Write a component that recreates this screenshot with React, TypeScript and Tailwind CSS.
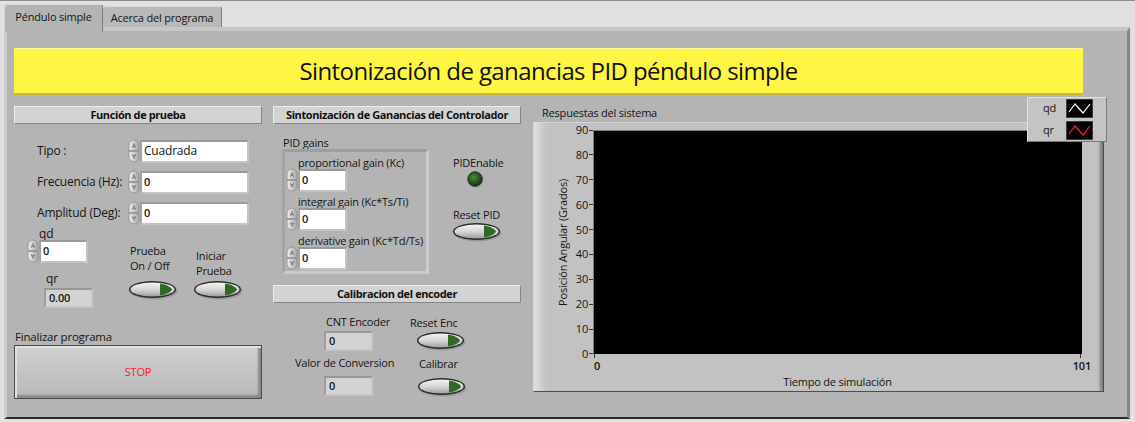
import React from "react";

function Spinner() {
  return (
    <svg width="12" height="24" viewBox="0 0 12 24" className="shrink-0">
      <defs>
        <linearGradient id="spg" x1="0" y1="0" x2="1" y2="0">
          <stop offset="0" stopColor="#f0f0f0" />
          <stop offset="1" stopColor="#a6a6a6" />
        </linearGradient>
      </defs>
      <path d="M1 11.6 V6 A5 5 0 0 1 11 6 V11.6 Z" fill="url(#spg)" stroke="#8d8d8d" strokeWidth="0.8" />
      <path d="M1 12.4 V18 A5 5 0 0 0 11 18 V12.4 Z" fill="url(#spg)" stroke="#8d8d8d" strokeWidth="0.8" />
      <path d="M4.4 9 L6 4.6 L7.6 9 M4.6 7.4 H7.4" fill="none" stroke="#6a6a6a" strokeWidth="0.7" />
      <path d="M4.4 15 L6 19.4 L7.6 15 M4.6 16.6 H7.4" fill="none" stroke="#6a6a6a" strokeWidth="0.7" />
    </svg>
  );
}

function OkButton() {
  return (
    <svg width="50" height="20" viewBox="0 0 50 20" className="shrink-0">
      <defs>
        <linearGradient id="okb" x1="0" y1="0" x2="0" y2="1">
          <stop offset="0" stopColor="#f4f4f4" />
          <stop offset="0.55" stopColor="#d2d2d2" />
          <stop offset="1" stopColor="#9d9d9d" />
        </linearGradient>
      </defs>
      <ellipse cx="25.5" cy="11" rx="24" ry="8.5" fill="#777" opacity="0.45" />
      <ellipse cx="24.5" cy="9.5" rx="23.5" ry="8.5" fill="#2a2a2a" />
      <ellipse cx="24.5" cy="9.5" rx="22" ry="7" fill="url(#okb)" />
      <path d="M32 3.6 C38.5 4.4 42.6 7.2 44 9.5 C42.6 11.8 38.5 14.6 32 15.4 Z" fill="#2e6a22" />
    </svg>
  );
}

function Led() {
  return (
    <svg width="18" height="18" viewBox="0 0 18 18">
      <defs>
        <radialGradient id="led" cx="0.42" cy="0.38" r="0.62">
          <stop offset="0" stopColor="#4d8a3e" />
          <stop offset="1" stopColor="#10360b" />
        </radialGradient>
      </defs>
      <circle cx="9.5" cy="9.5" r="8" fill="#707070" opacity="0.45" />
      <circle cx="9" cy="9" r="7.2" fill="url(#led)" stroke="#1a1a1a" strokeWidth="0.8" />
    </svg>
  );
}

function SectionHeader({ text }: { text: string }) {
  return (
    <div className="h-[18px] w-full flex items-center justify-center bg-[#d3d3d3] border border-t-[#ececec] border-l-[#ececec] border-r-[#858585] border-b-[#858585] text-[11px] tracking-[-0.4px] font-bold text-[#111]">
      {text}
    </div>
  );
}

function NumBox({ value, width }: { value: string; width: string }) {
  return (
    <div
      className={`${width} h-[23px] shrink-0 bg-white border-2 border-t-[#9a9a9a] border-l-[#a2a2a2] border-r-[#c4c4c4] border-b-[#c4c4c4] flex items-center pl-[2px] text-[11px] font-semibold`}
    >
      {value}
    </div>
  );
}

function Indicator({ value }: { value: string }) {
  return (
    <div className="w-[49px] h-[20px] bg-[#d3d3d3] border-2 border-t-[#979797] border-l-[#9c9c9c] border-r-[#c6c6c6] border-b-[#c6c6c6] flex items-center pl-[3px] text-[11px] font-semibold">
      {value}
    </div>
  );
}

function FieldRow({ label, value }: { label: string; value: string }) {
  return (
    <div className="flex items-center h-[24px]">
      <span className="w-[114px] pl-[23px] text-[12px]">{label}</span>
      <Spinner />
      <NumBox value={value} width="w-[109px]" />
    </div>
  );
}

function GainRow({ label }: { label: string }) {
  return (
    <div className="flex flex-col">
      <span className="h-[12px] leading-[12px] pl-[12px] text-[11px] whitespace-nowrap">{label}</span>
      <div className="flex items-center h-[24px] -mt-[1px]">
        <Spinner />
        <NumBox value="0" width="w-[49px]" />
      </div>
    </div>
  );
}

function Swatch({ color }: { color: string }) {
  return (
    <svg width="27" height="19" viewBox="0 0 27 19">
      <rect x="0" y="0" width="27" height="19" fill="#000" stroke="#777" strokeWidth="1" />
      <path d="M3 13 L9 5 L17 14 L24 5" fill="none" stroke={color} strokeWidth="1.2" />
    </svg>
  );
}

const yTicks = ["90", "80", "70", "60", "50", "40", "30", "20", "10", "0"];

export default function App() {
  return (
    <div className="w-[1135px] h-[422px] bg-[#e1e1e1] border-t border-t-[#8c8c8c] overflow-hidden font-['Open_Sans',sans-serif] text-[11px] tracking-[-0.2px] text-[#151515]">
      {/* tabs */}
      <div className="h-[26px] flex items-start pl-[4px]">
        <div className="relative z-10 mt-[3px] w-[99px] h-[28px] bg-[#b4b4b4] rounded-t-[3px] border-t border-l border-r border-t-[#d8d8d8] border-l-[#d8d8d8] border-r-[#7c7c7c] flex justify-center pt-[4px] text-[11px]">
          Péndulo simple
        </div>
        <div className="mt-[5px] w-[119px] h-[21px] bg-[#b9b9b9] rounded-t-[3px] border-t border-r border-t-[#d8d8d8] border-r-[#7c7c7c] flex justify-center pt-[3px] text-[11px]">
          Acerca del programa
        </div>
      </div>

      {/* panel */}
      <div className="ml-[4px] w-[1126px] h-[392px] bg-[#b4b4b4] border-t-4 border-t-[#c6c6c6] border-l-[3px] border-l-[#cdcdcd] border-r-[3px] border-r-[#878787] border-b-2 border-b-[#2b2b2b] pl-[7px] pt-[17px]">
        <div className="w-[1069px] h-[47px] bg-[#fff644] border-t border-t-[#fffb9c] border-b-2 border-b-[#c5bd3c] flex items-center justify-center text-[24px] tracking-[-0.6px] text-[#111]">
          Sintonización de ganancias PID péndulo simple
        </div>

        <div className="mt-[11px] flex">
          {/* left column */}
          <div className="w-[248px] flex flex-col">
            <SectionHeader text="Función de prueba" />
            <div className="mt-[15px] flex flex-col gap-[7px]">
              <div className="flex items-center h-[24px]">
                <span className="w-[114px] pl-[23px] text-[12px]">Tipo :</span>
                <Spinner />
                <div className="w-[109px] h-[23px] bg-white border-2 border-t-[#9a9a9a] border-l-[#a2a2a2] border-r-[#c4c4c4] border-b-[#c4c4c4] flex items-center pl-[2px] text-[12px]">
                  Cuadrada
                </div>
              </div>
              <FieldRow label="Frecuencia (Hz):" value="0" />
              <FieldRow label="Amplitud (Deg):" value="0" />
            </div>

            <div className="flex">
              <div className="w-[114px] pl-[13px] flex flex-col">
                <span className="h-[12px] leading-[12px] mt-[3px] pl-[12px] text-[12px]">qd</span>
                <div className="flex items-center h-[24px] -mt-[1px]">
                  <Spinner />
                  <NumBox value="0" width="w-[49px]" />
                </div>
                <span className="h-[12px] leading-[12px] mt-[10px] pl-[19px] text-[12px]">qr</span>
                <div className="mt-[3px] pl-[17px]">
                  <Indicator value="0.00" />
                </div>
              </div>
              <div className="w-[65px] flex flex-col mt-[18px]">
                <span className="pl-[2px] leading-[15px] text-[11px] whitespace-nowrap">Prueba</span>
                <span className="pl-[2px] leading-[15px] text-[11px] whitespace-nowrap">On / Off</span>
                <div className="mt-[7px]">
                  <OkButton />
                </div>
              </div>
              <div className="flex flex-col mt-[23px]">
                <span className="pl-[3px] leading-[15px] text-[11px] whitespace-nowrap">Iniciar</span>
                <span className="pl-[3px] leading-[15px] text-[11px] whitespace-nowrap">Prueba</span>
                <div className="mt-[2px]">
                  <OkButton />
                </div>
              </div>
            </div>

            <span className="mt-[22px] h-[14px] leading-[14px] pl-[1px] text-[11.5px]">Finalizar programa</span>
            <div className="mt-[1px] w-[248px] h-[54px] border border-[#4a4a4a] bg-linear-to-b from-[#d0d0d0] to-[#b8b8b8] shadow-[inset_2px_2px_0_#e2e2e2,inset_-3px_-3px_2px_#8a8a8a] flex items-center justify-center text-[#ff2020] text-[11px]">
              STOP
            </div>
          </div>

          {/* middle column */}
          <div className="ml-[11px] w-[248px] flex flex-col">
            <SectionHeader text="Sintonización de Ganancias del Controlador" />
            <span className="mt-[12px] h-[13px] leading-[13px] pl-[10px] text-[11px]">PID gains</span>
            <div className="flex">
              <div className="ml-[9px] w-[147px] border-[3px] border-t-[#9e9e9e] border-l-[#a4a4a4] border-r-[#cbcbcb] border-b-[#cbcbcb] pt-[5px] pl-[1px] pb-[1px] flex flex-col gap-[4px]">
                <GainRow label="proportional gain (Kc)" />
                <GainRow label="integral gain (Kc*Ts/Ti)" />
                <GainRow label="derivative gain (Kc*Td/Ts)" />
              </div>
              <div className="ml-[24px] flex flex-col">
                <span className="mt-[7px] h-[14px] leading-[14px] text-[11px]">PIDEnable</span>
                <div className="ml-[13px]">
                  <Led />
                </div>
                <span className="mt-[20px] h-[14px] leading-[14px] text-[11px]">Reset PID</span>
                <div className="-ml-[1px]">
                  <OkButton />
                </div>
              </div>
            </div>

            <div className="mt-[11px]">
              <SectionHeader text="Calibracion del encoder" />
            </div>
            <div className="flex">
              <div className="w-[137px] flex flex-col">
                <span className="mt-[12px] ml-[53px] h-[14px] leading-[14px] text-[11px]">CNT Encoder</span>
                <div className="mt-[2px] ml-[51px]">
                  <Indicator value="0" />
                </div>
                <span className="mt-[5px] ml-[22px] h-[14px] leading-[14px] text-[11px]">Valor de Conversion</span>
                <div className="mt-[6px] ml-[51px]">
                  <Indicator value="0" />
                </div>
              </div>
              <div className="flex flex-col">
                <span className="mt-[13px] h-[14px] leading-[14px] text-[11px]">Reset Enc</span>
                <div className="mt-[1px] ml-[6px]">
                  <OkButton />
                </div>
                <span className="mt-[6px] ml-[9px] h-[14px] leading-[14px] text-[11px]">Calibrar</span>
                <div className="mt-[6px] ml-[7px]">
                  <OkButton />
                </div>
              </div>
            </div>
          </div>

          {/* graph */}
          <div className="relative ml-[12px] w-[571px] flex flex-col">
            <span className="h-[14px] leading-[14px] pl-[9px] text-[11px]">Respuestas del sistema</span>
            <div className="mt-[2px] h-[270px] bg-[#c2c2c2] border border-t-[#d6d6d6] border-l-[#d6d6d6] border-r-[#4e4e4e] border-b-[#4e4e4e] shadow-[inset_10px_0_8px_-4px_#e2e2e2,inset_-4px_0_3px_-1px_#7a7a7a] pt-[7px] flex flex-col">
              <div className="flex">
                <div className="w-[59px] pl-[22px] flex">
                  <div className="w-[14px] h-[224px] flex items-center justify-center">
                    <span className="[writing-mode:vertical-rl] rotate-180 whitespace-nowrap text-[11px] leading-[14px]">
                      Posición Angular (Grados)
                    </span>
                  </div>
                  <div className="w-[23px] h-[224px] flex flex-col justify-between">
                    {yTicks.map((t) => (
                      <div key={t} className="h-0 flex items-center justify-end gap-[1px]">
                        <span className="text-[11px] leading-[12px]">{t}</span>
                        <span className="w-[4px] h-px bg-[#333]" />
                      </div>
                    ))}
                  </div>
                </div>
                <div className="w-[489px] h-[224px] bg-black border-t border-l border-t-[#7a7a7a] border-l-[#7a7a7a]" />
              </div>
              <div className="ml-[59px] w-[489px] h-[5px] flex justify-between px-[1px]">
                <span className="w-px h-[4px] bg-[#333]" />
                <span className="w-px h-[4px] bg-[#333]" />
              </div>
              <div className="ml-[59px] w-[498px] h-[14px] flex justify-between text-[11px] leading-[14px] font-semibold">
                <span className="pl-[1px]">0</span>
                <span>101</span>
              </div>
              <div className="mt-[2px] ml-[59px] w-[489px] h-[14px] text-center text-[11px] leading-[14px]">
                Tiempo de simulación
              </div>
            </div>

            {/* legend */}
            <div className="absolute left-[494px] -top-[9px] w-[80px] h-[45px] bg-[#c4c4c4] border border-t-[#e0e0e0] border-l-[#e0e0e0] border-r-[#7a7a7a] border-b-[#7a7a7a] flex flex-col gap-[3px] pt-[1px]">
              <div className="flex items-center h-[19px]">
                <span className="w-[38px] pl-[15px] text-[11px]">qd</span>
                <Swatch color="#ffffff" />
              </div>
              <div className="flex items-center h-[19px]">
                <span className="w-[38px] pl-[15px] text-[11px]">qr</span>
                <Swatch color="#ff2a2a" />
              </div>
            </div>
          </div>
        </div>
      </div>
    </div>
  );
}
